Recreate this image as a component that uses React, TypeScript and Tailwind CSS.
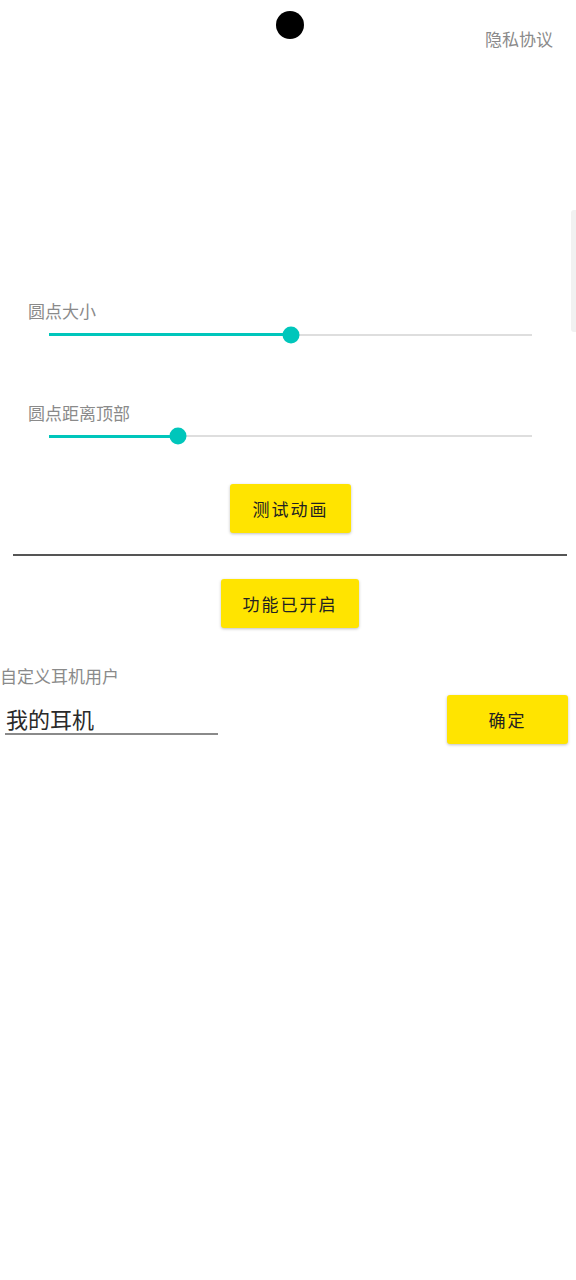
import React from 'react';

const FONT = { fontFamily: '"Noto Sans CJK SC", "Noto Sans", sans-serif' };

const Slider: React.FC<{ value: number; className?: string }> = ({ value, className = '' }) => (
  <div className={`pl-[49px] pr-[44px] flex items-center ${className}`}>
    <div className="relative w-full h-[3px]">
      <div className="absolute inset-0 top-[0.5px] h-[2px] bg-[#dedede]" />
      <div className="absolute left-0 top-0 h-[3px] bg-[#00c6bb]" style={{ width: `${value}%` }} />
      <div
        className="absolute top-1/2 w-[17px] h-[17px] -translate-x-1/2 -translate-y-1/2 rounded-full bg-[#00c6bb]"
        style={{ left: `${value}%` }}
      />
    </div>
  </div>
);

const YellowButton: React.FC<{ label: string; className?: string }> = ({ label, className = '' }) => (
  <button
    type="button"
    className={`h-[49px] rounded-[3px] bg-[#ffe400] text-[17px] tracking-[2px] text-[#222] shadow-[0_1px_3px_rgba(0,0,0,0.25)] ${className}`}
  >
    {label}
  </button>
);

export default function App() {
  return (
    <div className="relative w-[576px] min-h-[1280px] bg-white" style={FONT}>
      {/* floating dot preview */}
      <div className="absolute left-[276px] top-[11px] w-[28px] h-[28px] rounded-full bg-black" />
      {/* faint edge handle */}
      <div className="absolute right-0 top-[210px] w-[5px] h-[122px] rounded-l-[3px] bg-[#f1f1f1]" />

      <div className="flex justify-end pt-[27px] pr-[23px]">
        <span className="text-[17px] leading-[24px] text-[#8a8a8a]">隐私协议</span>
      </div>

      <div className="mt-[248px] pl-[28px] text-[17px] leading-[24px] text-[#8a8a8a]">圆点大小</div>
      <Slider value={50} className="h-[23px]" />

      <div className="mt-[55px] pl-[28px] text-[17px] leading-[24px] text-[#8a8a8a]">圆点距离顶部</div>
      <Slider value={26.7} className="h-[22px]" />

      <div className="mt-[37px] flex justify-center pl-[5px]">
        <YellowButton label="测试动画" className="w-[121px]" />
      </div>

      <div className="mt-[21px] ml-[13px] mr-[9px] h-[2px] bg-[#555]" />

      <div className="mt-[23px] flex justify-center pl-[4px]">
        <YellowButton label="功能已开启" className="w-[138px]" />
      </div>

      <div className="mt-[36px] text-[17px] leading-[24px] text-[#8a8a8a]">自定义耳机用户</div>

      <div className="flex justify-between items-start pr-[8px]">
        <div className="ml-[5px] mt-[15px] w-[213px] border-b-2 border-[#8a8a8a]">
          <input
            readOnly
            defaultValue="我的耳机"
            className="w-full pl-[1px] text-[22px] leading-[30px] h-[30px] text-[#2a2a2a] outline-none bg-transparent"
            style={FONT}
          />
        </div>
        <YellowButton label="确定" className="mt-[7px] w-[121px]" />
      </div>
    </div>
  );
}
